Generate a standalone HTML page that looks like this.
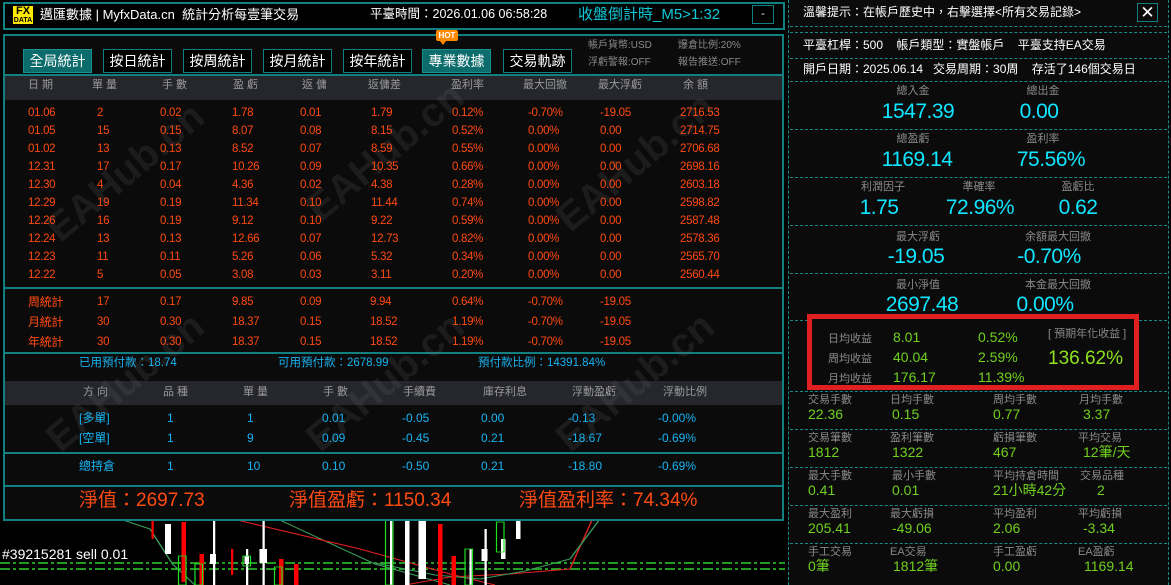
<!DOCTYPE html>
<html><head><meta charset="utf-8">
<style>
*{margin:0;padding:0;box-sizing:border-box}
body{width:1171px;height:585px;background:#000;overflow:hidden;position:relative;font-family:"Liberation Sans","Noto Sans CJK TC",sans-serif;}
.a{position:absolute;white-space:nowrap;line-height:1}
.box{position:absolute;border:2px solid #128080;}
.btn{position:absolute;top:49px;height:24px;width:69px;border:1px solid #128080;color:#fff;font-size:14px;text-align:center;line-height:22px;background:#000;white-space:nowrap}
.btn.on{background:#0c6b6b;border-color:#1a9090}
.h{color:#9a9a9a;font-size:11px}
.r{color:#ff4a12;font-size:11.5px;letter-spacing:-.3px}
.b{color:#18b4f2;font-size:12px}
.dl{position:absolute;left:790px;width:377px;border-top:1px dashed #168a8a;height:0}
.gl{color:#8a8a8a;font-size:11px;transform:translateX(-50%)}
.cv{color:#10e6ff;font-size:21px;transform:translateX(-50%);letter-spacing:-.5px}
.g{color:#70d020;font-size:14px}
.gg{color:#8a8a8a;font-size:11px}
.wm{position:absolute;color:rgba(120,120,120,.16);font-size:40px;font-weight:bold;transform:rotate(-40deg);white-space:nowrap}
</style></head><body>

<!-- chart bottom -->
<svg class="a" style="left:0;top:519px" width="785" height="66">
<line x1="0" y1="44" x2="785" y2="44" stroke="#30d030" stroke-width="1.5" stroke-dasharray="10,3,3,3"/>
<line x1="0" y1="50" x2="785" y2="50" stroke="#30d030" stroke-width="1.5" stroke-dasharray="10,3,3,3"/>
<g transform="scale(1.5,1)">
<polyline points="80,0 100,10 115,45 130,66" fill="none" stroke="#3a9a5a"/>
<polyline points="185,0 250,45 300,66" fill="none" stroke="#3a9a5a"/>
<polyline points="155,0 240,30 300,55 330,66" fill="none" stroke="#e02020"/>
<polyline points="270,66 300,58 340,55 380,50 395,0" fill="none" stroke="#e02020"/>
<polyline points="250,44 290,56 320,60 350,52 380,40 400,0" fill="none" stroke="#3a9a5a"/>
<g fill="#fff">
<rect x="110" y="5" width="4" height="30"/><rect x="142" y="0" width="1.5" height="66"/><rect x="140" y="35" width="4" height="10"/>
<rect x="164" y="30" width="1.5" height="36"/><rect x="163" y="37" width="3" height="8"/>
<rect x="175" y="0" width="1.5" height="66"/><rect x="173" y="30" width="5" height="14"/>
<rect x="270" y="0" width="3" height="66"/><rect x="260" y="0" width="1.5" height="66"/>
<rect x="279" y="0" width="5" height="60"/>
<rect x="313" y="30" width="1.5" height="36"/><rect x="323" y="10" width="1.5" height="56"/><rect x="321" y="30" width="4" height="12"/>
<rect x="334" y="20" width="3" height="20"/><rect x="344" y="0" width="3" height="20"/>
</g>
<g fill="#f00"><rect x="121" y="3" width="3" height="60"/><rect x="133" y="35" width="3" height="31"/><rect x="186" y="40" width="3" height="26"/><rect x="196" y="45" width="3" height="21"/><rect x="292" y="5" width="3" height="61"/><rect x="301" y="37" width="3" height="29"/><rect x="154" y="30" width="1.5" height="26"/><rect x="101" y="0" width="1.5" height="20"/></g>
<g fill="none" stroke="#20e020" stroke-width="0.8"><rect x="119" y="37" width="5" height="29"/><rect x="130" y="45" width="5" height="21"/><rect x="162" y="37" width="5" height="10"/><rect x="183" y="48" width="5" height="18"/><rect x="310" y="30" width="5" height="36"/><rect x="331" y="3" width="5" height="30"/><rect x="257" y="0" width="5" height="66"/></g>
</g>
<text x="2" y="40" fill="#fff" font-size="14" font-family="Liberation Sans">#39215281 sell 0.01</text>
</svg>

<!-- top bar -->
<div class="box" style="left:3px;top:2px;width:782px;height:28px"></div>
<div class="a" style="left:12px;top:5px;width:22px;height:20px;background:#ffe800;border:1px solid #000;text-align:center;font-weight:bold">
 <div style="font-size:11px;line-height:10px;color:#000">FX</div><div style="font-size:7px;line-height:9px;color:#000">DATA</div></div>
<div class="a" style="left:40px;top:8px;color:#fff;font-size:13px">邁匯數據 | MyfxData.cn&nbsp; 統計分析每壹筆交易</div>
<div class="a" style="left:370px;top:8px;color:#fff;font-size:12.5px">平臺時間：2026.01.06 06:58:28</div>
<div class="a" style="left:578px;top:7px;color:#10c8d8;font-size:15px">收盤倒計時_M5&gt;1:32</div>
<div class="a" style="left:752px;top:5px;width:22px;height:19px;border:1px solid #128080;color:#fff;font-size:11px;text-align:center;line-height:16px">-</div>

<!-- main panel -->
<div class="a" style="left:3px;top:34px;width:781px;height:487px;background:#0b0b0b;border:2px solid #128080"></div>
<div class="a" style="left:5px;top:76px;width:777px;height:24px;background:#25272d"></div>
<div class="a" style="left:5px;top:381px;width:777px;height:24px;background:#25272d"></div>
<div class="a" style="left:3px;top:74px;width:781px;height:2px;background:#128080"></div>
<div class="a" style="left:3px;top:287px;width:781px;height:2px;background:#128080"></div>
<div class="a" style="left:3px;top:352px;width:781px;height:2px;background:#128080"></div>
<div class="a" style="left:3px;top:452px;width:781px;height:2px;background:#128080"></div>
<div class="a" style="left:3px;top:485px;width:781px;height:2px;background:#128080"></div>

<div class="wm" style="left:30px;top:150px">EAHub.cn</div>
<div class="wm" style="left:290px;top:130px">EAHub.cn</div>
<div class="wm" style="left:540px;top:140px">EAHub.cn</div>
<div class="wm" style="left:30px;top:360px">EAHub.cn</div>
<div class="wm" style="left:290px;top:360px">EAHub.cn</div>
<div class="wm" style="left:540px;top:360px">EAHub.cn</div>
<div class="wm" style="left:780px;top:150px">EAHub.cn</div>
<div class="wm" style="left:1030px;top:150px">EAHub.cn</div>
<div class="wm" style="left:800px;top:360px">EAHub.cn</div>

<div class="btn on" style="left:23px">全局統計</div>
<div class="btn" style="left:103px">按日統計</div>
<div class="btn" style="left:183px">按周統計</div>
<div class="btn" style="left:263px">按月統計</div>
<div class="btn" style="left:343px">按年統計</div>
<div class="btn on" style="left:422px">專業數據</div>
<div class="btn" style="left:503px">交易軌跡</div>
<div class="a" style="left:436px;top:30px;width:22px;height:11px;background:#ff8a00;color:#fff;font-size:8px;font-weight:bold;text-align:center;line-height:11px;border-radius:2px">HOT</div>
<div class="a" style="left:440px;top:41px;border-left:3px solid transparent;border-right:3px solid transparent;border-top:4px solid #ff8a00"></div>
<div class="a gg" style="left:588px;top:41px;font-size:10px">帳戶貨幣:USD</div>
<div class="a gg" style="left:678px;top:41px;font-size:10px">爆倉比例:20%</div>
<div class="a gg" style="left:588px;top:58px;font-size:10px">浮虧警報:OFF</div>
<div class="a gg" style="left:678px;top:58px;font-size:10px">報告推送:OFF</div>

<div class="a h" style="left:28px;top:80px">日 期</div>
<div class="a h" style="left:92px;top:80px">單 量</div>
<div class="a h" style="left:162px;top:80px">手 數</div>
<div class="a h" style="left:233px;top:80px">盈 虧</div>
<div class="a h" style="left:302px;top:80px">返 傭</div>
<div class="a h" style="left:368px;top:80px">返傭差</div>
<div class="a h" style="left:451px;top:80px">盈利率</div>
<div class="a h" style="left:523px;top:80px">最大回撤</div>
<div class="a h" style="left:598px;top:80px">最大浮虧</div>
<div class="a h" style="left:683px;top:80px">余 額</div>

<div class="a r" style="left:28px;top:104px;line-height:18px">01.06<br>01.05<br>01.02<br>12.31<br>12.30<br>12.29<br>12.26<br>12.24<br>12.23<br>12.22</div>
<div class="a r" style="left:97px;top:104px;line-height:18px">2<br>15<br>13<br>17<br>4<br>19<br>16<br>13<br>11<br>5</div>
<div class="a r" style="left:160px;top:104px;line-height:18px">0.02<br>0.15<br>0.13<br>0.17<br>0.04<br>0.19<br>0.19<br>0.13<br>0.11<br>0.05</div>
<div class="a r" style="left:232px;top:104px;line-height:18px">1.78<br>8.07<br>8.52<br>10.26<br>4.36<br>11.34<br>9.12<br>12.66<br>5.26<br>3.08</div>
<div class="a r" style="left:300px;top:104px;line-height:18px">0.01<br>0.08<br>0.07<br>0.09<br>0.02<br>0.10<br>0.10<br>0.07<br>0.06<br>0.03</div>
<div class="a r" style="left:371px;top:104px;line-height:18px">1.79<br>8.15<br>8.59<br>10.35<br>4.38<br>11.44<br>9.22<br>12.73<br>5.32<br>3.11</div>
<div class="a r" style="left:452px;top:104px;line-height:18px">0.12%<br>0.52%<br>0.55%<br>0.66%<br>0.28%<br>0.74%<br>0.59%<br>0.82%<br>0.34%<br>0.20%</div>
<div class="a r" style="left:528px;top:104px;line-height:18px">-0.70%<br>0.00%<br>0.00%<br>0.00%<br>0.00%<br>0.00%<br>0.00%<br>0.00%<br>0.00%<br>0.00%</div>
<div class="a r" style="left:600px;top:104px;line-height:18px">-19.05<br>0.00<br>0.00<br>0.00<br>0.00<br>0.00<br>0.00<br>0.00<br>0.00<br>0.00</div>
<div class="a r" style="left:680px;top:104px;line-height:18px">2716.53<br>2714.75<br>2706.68<br>2698.16<br>2603.18<br>2598.82<br>2587.48<br>2578.36<br>2565.70<br>2560.44</div>

<div class="a r" style="left:28px;top:292px;line-height:20px;font-size:12px">周統計<br>月統計<br>年統計</div>
<div class="a r" style="left:97px;top:292px;line-height:20px">17<br>30<br>30</div>
<div class="a r" style="left:160px;top:292px;line-height:20px">0.17<br>0.30<br>0.30</div>
<div class="a r" style="left:232px;top:292px;line-height:20px">9.85<br>18.37<br>18.37</div>
<div class="a r" style="left:300px;top:292px;line-height:20px">0.09<br>0.15<br>0.15</div>
<div class="a r" style="left:370px;top:292px;line-height:20px">9.94<br>18.52<br>18.52</div>
<div class="a r" style="left:452px;top:292px;line-height:20px">0.64%<br>1.19%<br>1.19%</div>
<div class="a r" style="left:528px;top:292px;line-height:20px">-0.70%<br>-0.70%<br>-0.70%</div>
<div class="a r" style="left:600px;top:292px;line-height:20px">-19.05<br>-19.05<br>-19.05</div>

<div class="a b" style="left:79px;top:358px;font-size:11.5px">已用預付款：18.74</div>
<div class="a b" style="left:278px;top:358px;font-size:11.5px">可用預付款：2678.99</div>
<div class="a b" style="left:478px;top:358px;font-size:11.5px">預付款比例：14391.84%</div>

<div class="a h" style="left:83px;top:387px">方 向</div>
<div class="a h" style="left:163px;top:387px">品 種</div>
<div class="a h" style="left:243px;top:387px">單 量</div>
<div class="a h" style="left:323px;top:387px">手 數</div>
<div class="a h" style="left:403px;top:387px">手續費</div>
<div class="a h" style="left:483px;top:387px">庫存利息</div>
<div class="a h" style="left:572px;top:387px">浮動盈虧</div>
<div class="a h" style="left:663px;top:387px">浮動比例</div>

<div class="a b" style="left:79px;top:408px;line-height:20px">[多單]<br>[空單]</div>
<div class="a b" style="left:167px;top:408px;line-height:20px">1<br>1</div>
<div class="a b" style="left:247px;top:408px;line-height:20px">1<br>9</div>
<div class="a b" style="left:322px;top:408px;line-height:20px">0.01<br>0.09</div>
<div class="a b" style="left:402px;top:408px;line-height:20px">-0.05<br>-0.45</div>
<div class="a b" style="left:481px;top:408px;line-height:20px">0.00<br>0.21</div>
<div class="a b" style="left:568px;top:408px;line-height:20px">-0.13<br>-18.67</div>
<div class="a b" style="left:658px;top:408px;line-height:20px">-0.00%<br>-0.69%</div>

<div class="a b" style="left:79px;top:460px">總持倉</div>
<div class="a b" style="left:167px;top:460px">1</div>
<div class="a b" style="left:247px;top:460px">10</div>
<div class="a b" style="left:322px;top:460px">0.10</div>
<div class="a b" style="left:402px;top:460px">-0.50</div>
<div class="a b" style="left:481px;top:460px">0.21</div>
<div class="a b" style="left:568px;top:460px">-18.80</div>
<div class="a b" style="left:658px;top:460px">-0.69%</div>

<div class="a" style="left:79px;top:491px;color:#ff4a12;font-size:19px">淨值：2697.73</div>
<div class="a" style="left:289px;top:491px;color:#ff4a12;font-size:19px">淨值盈虧：1150.34</div>
<div class="a" style="left:519px;top:491px;color:#ff4a12;font-size:19px">淨值盈利率：74.34%</div>

<!-- right panel -->
<div class="a" style="left:788px;top:0;width:381px;height:585px;background:#0b0b0b;border-left:1px dashed #168a8a;border-right:1px dashed #168a8a"></div>
<div class="a" style="left:803px;top:6px;color:#fff;font-size:12px">溫馨提示：在帳戶歷史中，右擊選擇&lt;所有交易記錄&gt;</div>
<div class="a" style="left:1137px;top:3px;width:21px;height:19px;border:1px solid #128080;color:#fff;font-size:17px;text-align:center;line-height:17px">✕</div>
<div class="dl" style="top:26px"></div>
<div class="dl" style="top:32px"></div>
<div class="a" style="left:803px;top:39px;color:#fff;font-size:12px">平臺杠桿：500&nbsp;&nbsp;&nbsp;&nbsp;帳戶類型：實盤帳戶&nbsp;&nbsp;&nbsp;&nbsp;平臺支持EA交易</div>
<div class="dl" style="top:58px"></div>
<div class="a" style="left:803px;top:63px;color:#fff;font-size:12px">開戶日期：2025.06.14&nbsp;&nbsp;&nbsp;交易周期：30周&nbsp;&nbsp;&nbsp;&nbsp;存活了146個交易日</div>
<div class="dl" style="top:81px"></div>
<div class="dl" style="top:129px"></div>
<div class="dl" style="top:177px"></div>
<div class="dl" style="top:225px"></div>
<div class="dl" style="top:273px"></div>
<div class="dl" style="top:320px"></div>

<div class="a gl" style="left:913px;top:86px">總入金</div><div class="a cv" style="left:918px;top:101px">1547.39</div>
<div class="a gl" style="left:1043px;top:86px">總出金</div><div class="a cv" style="left:1039px;top:101px">0.00</div>
<div class="a gl" style="left:913px;top:134px">總盈虧</div><div class="a cv" style="left:917px;top:149px">1169.14</div>
<div class="a gl" style="left:1043px;top:134px">盈利率</div><div class="a cv" style="left:1051px;top:149px">75.56%</div>
<div class="a gl" style="left:883px;top:182px">利潤因子</div><div class="a cv" style="left:879px;top:197px">1.75</div>
<div class="a gl" style="left:979px;top:182px">準確率</div><div class="a cv" style="left:980px;top:197px">72.96%</div>
<div class="a gl" style="left:1078px;top:182px">盈虧比</div><div class="a cv" style="left:1078px;top:197px">0.62</div>
<div class="a gl" style="left:918px;top:232px">最大浮虧</div><div class="a cv" style="left:916px;top:246px">-19.05</div>
<div class="a gl" style="left:1058px;top:232px">余額最大回撤</div><div class="a cv" style="left:1049px;top:246px">-0.70%</div>
<div class="a gl" style="left:918px;top:280px">最小淨值</div><div class="a cv" style="left:922px;top:294px">2697.48</div>
<div class="a gl" style="left:1058px;top:280px">本金最大回撤</div><div class="a cv" style="left:1045px;top:294px">0.00%</div>

<div class="a" style="left:807px;top:314px;width:332px;height:76px;border:5px solid #e02020;background:#0b0b0b"></div>
<div class="a gg" style="left:828px;top:329px;line-height:20px">日均收益<br>周均收益<br>月均收益</div>
<div class="a g" style="left:893px;top:327px;line-height:20px">8.01<br>40.04<br>176.17</div>
<div class="a g" style="left:978px;top:327px;line-height:20px">0.52%<br>2.59%<br>11.39%</div>
<div class="a gg" style="left:1048px;top:329px">[ 預期年化收益 ]</div>
<div class="a" style="left:1048px;top:349px;color:#90e020;font-size:19px">136.62%</div>

<div class="dl" style="top:391px"></div>
<div class="dl" style="top:429px"></div>
<div class="dl" style="top:467px"></div>
<div class="dl" style="top:505px"></div>
<div class="dl" style="top:543px"></div>

<div class="a gg" style="left:808px;top:395px">交易手數</div><div class="a g" style="left:808px;top:407px">22.36</div>
<div class="a gg" style="left:890px;top:395px">日均手數</div><div class="a g" style="left:892px;top:407px">0.15</div>
<div class="a gg" style="left:993px;top:395px">周均手數</div><div class="a g" style="left:993px;top:407px">0.77</div>
<div class="a gg" style="left:1079px;top:395px">月均手數</div><div class="a g" style="left:1083px;top:407px">3.37</div>

<div class="a gg" style="left:808px;top:433px">交易筆數</div><div class="a g" style="left:808px;top:445px">1812</div>
<div class="a gg" style="left:890px;top:433px">盈利筆數</div><div class="a g" style="left:892px;top:445px">1322</div>
<div class="a gg" style="left:993px;top:433px">虧損筆數</div><div class="a g" style="left:993px;top:445px">467</div>
<div class="a gg" style="left:1078px;top:433px">平均交易</div><div class="a g" style="left:1083px;top:445px">12筆/天</div>

<div class="a gg" style="left:808px;top:471px">最大手數</div><div class="a g" style="left:808px;top:483px">0.41</div>
<div class="a gg" style="left:892px;top:471px">最小手數</div><div class="a g" style="left:892px;top:483px">0.01</div>
<div class="a gg" style="left:993px;top:471px">平均持倉時間</div><div class="a g" style="left:993px;top:483px">21小時42分</div>
<div class="a gg" style="left:1080px;top:471px">交易品種</div><div class="a g" style="left:1097px;top:483px">2</div>

<div class="a gg" style="left:808px;top:509px">最大盈利</div><div class="a g" style="left:808px;top:521px">205.41</div>
<div class="a gg" style="left:890px;top:509px">最大虧損</div><div class="a g" style="left:892px;top:521px">-49.06</div>
<div class="a gg" style="left:993px;top:509px">平均盈利</div><div class="a g" style="left:993px;top:521px">2.06</div>
<div class="a gg" style="left:1078px;top:509px">平均虧損</div><div class="a g" style="left:1083px;top:521px">-3.34</div>

<div class="a gg" style="left:808px;top:547px">手工交易</div><div class="a g" style="left:808px;top:559px">0筆</div>
<div class="a gg" style="left:890px;top:547px">EA交易</div><div class="a g" style="left:893px;top:559px">1812筆</div>
<div class="a gg" style="left:993px;top:547px">手工盈虧</div><div class="a g" style="left:993px;top:559px">0.00</div>
<div class="a gg" style="left:1078px;top:547px">EA盈虧</div><div class="a g" style="left:1084px;top:559px">1169.14</div>
</body></html>
